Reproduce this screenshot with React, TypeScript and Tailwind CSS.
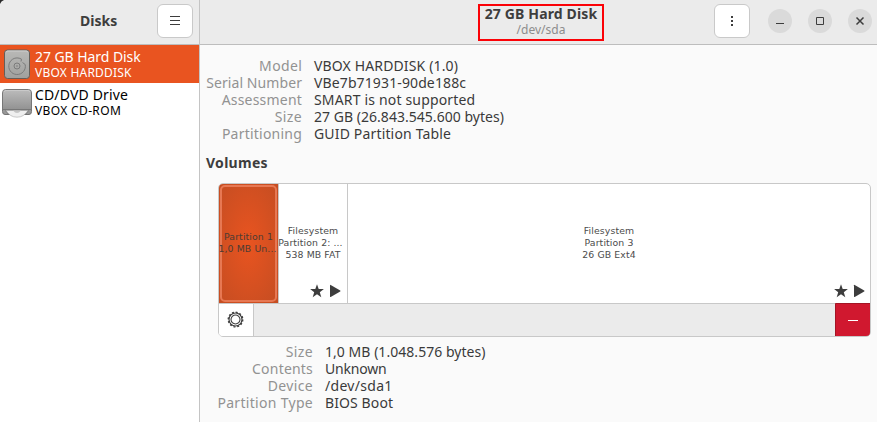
import type { ReactNode } from "react";

type Row = { label: string; value: string; labelClass?: string; valueClass?: string };

const diskRows: Row[] = [
  { label: "Model", value: "VBOX HARDDISK (1.0)", labelClass: "tracking-[0.4px] -mr-[0.4px]", valueClass: "tracking-[0.14px]" },
  { label: "Serial Number", value: "VBe7b71931-90de188c", labelClass: "tracking-[0.08px]", valueClass: "tracking-[0.12px]" },
  { label: "Assessment", value: "SMART is not supported", labelClass: "tracking-[0.2px]", valueClass: "tracking-[0.17px]" },
  { label: "Size", value: "27 GB (26.843.545.600 bytes)", labelClass: "tracking-[0.35px]", valueClass: "tracking-[0.03px]" },
  { label: "Partitioning", value: "GUID Partition Table", labelClass: "tracking-[0.22px]", valueClass: "tracking-[0.16px]" },
];

const volumeRows: Row[] = [
  { label: "Size", value: "1,0 MB (1.048.576 bytes)", labelClass: "tracking-[0.35px]", valueClass: "tracking-[0.04px]" },
  { label: "Contents", value: "Unknown", labelClass: "tracking-[0.2px]", valueClass: "-tracking-[0.2px]" },
  { label: "Device", value: "/dev/sda1", labelClass: "tracking-[0.35px]", valueClass: "tracking-[0.3px]" },
  { label: "Partition Type", value: "BIOS Boot", labelClass: "tracking-[0.3px]", valueClass: "tracking-[0.1px]" },
];

function Details({ rows, className }: { rows: Row[]; className: string }) {
  return (
    <dl className={`grid auto-rows-[17px] gap-x-3 text-[14px] leading-[17px] whitespace-nowrap ${className}`}>
      {rows.map((r) => (
        <div key={r.label} className="contents">
          <dt className="text-right text-[#929292]"><span className={r.labelClass}>{r.label}</span></dt>
          <dd className="text-[#3a3a3a]"><span className={r.valueClass}>{r.value}</span></dd>
        </div>
      ))}
    </dl>
  );
}

function HardDiskIcon() {
  return (
    <svg width="26" height="30" viewBox="0 0 26 30" fill="none">
      <defs>
        <linearGradient id="hd" x1="0" y1="0" x2="0" y2="1">
          <stop stopColor="#b9b9b7" />
          <stop offset="1" stopColor="#a0a09e" />
        </linearGradient>
      </defs>
      <rect x=".5" y="1" width="25" height="28.5" rx="3" fill="url(#hd)" stroke="#655e59" />
      <path d="M2 3.5Q2 2 4 2H22Q24 2 24 3.5" stroke="#cecece" />
      <path d="M17.5 10.2A8.3 8.3 0 1 0 21.2 15.5M17.5 10.2L17 12.5M21.2 15.5L18.5 13.5" stroke="#7b7b7b" />
      <circle cx="13" cy="17" r="3" stroke="#7b7b7b" />
      <circle cx="13" cy="17" r=".8" fill="#7b7b7b" />
    </svg>
  );
}

function OpticalDriveIcon() {
  return (
    <svg width="30" height="29" viewBox="0 0 30 29" fill="none">
      <defs>
        <linearGradient id="od" x1="0" y1="0" x2="0" y2="1">
          <stop stopColor="#bcbcbc" />
          <stop offset="1" stopColor="#929292" />
        </linearGradient>
      </defs>
      <path d="M.5 18H29.5V22.5Q29.5 25.5 27 25.5H3Q.5 25.5 .5 22.5Z" fill="#999" stroke="#747474" />
      <path d="M3 21.5H27L24 25H6Z" fill="#666" />
      <path d="M4 21.5H26Q22 28.2 15 28.2Q8 28.2 4 21.5Z" fill="#efefef" stroke="#aaa" strokeWidth=".6" />
      <path d="M11 21.5H19Q17 24 15 24Q13 24 11 21.5Z" fill="#c5c5c5" />
      <path d="M3.5 .5H26.5Q29.5 .5 29.5 4V20.5H.5V4Q.5 .5 3.5 .5Z" fill="url(#od)" stroke="#777" />
      <path d="M2 3Q2 1.5 4 1.5H26Q28 1.5 28 3" stroke="#d0d0d0" strokeWidth=".7" />
      <path d="M1 20.5H29" stroke="#777" />
    </svg>
  );
}

function VolumeIcons() {
  return (
    <svg width="32" height="14" viewBox="0 0 32 14" fill="#3d3d3d">
      <path d="M7 .2L8.7 5.1H13.9L9.8 8.2L11.3 13.2L7 10.2L2.7 13.2L4.2 8.2L.1 5.1H5.3Z" />
      <path d="M20 1.2Q20 .5 20.7 .9L30.2 6.4Q30.9 7 30.2 7.5L20.7 12.9Q20 13.2 20 12.5Z" />
    </svg>
  );
}

function GearIcon() {
  return (
    <svg width="17" height="17" viewBox="-8.5 -8.5 17 17" fill="none" stroke="#3d3d3d">
      <circle r="6.5" strokeWidth="1.2" />
      <circle r="7.3" strokeWidth="1.3" strokeDasharray="2 1.822" />
      <circle r="4.5" strokeWidth="1.1" />
    </svg>
  );
}

function WindowButton({ children }: { children: ReactNode }) {
  return (
    <button className="flex size-6 items-center justify-center rounded-full bg-[#dadada]">
      <svg width="10" height="10" viewBox="0 0 10 10" fill="none" stroke="#3d3d3d">{children}</svg>
    </button>
  );
}

function HeaderButton({ children, className }: { children: ReactNode; className: string }) {
  return (
    <button className={`flex h-[34px] w-9 items-center justify-center rounded-[6px] border border-[#c9c9c9] bg-white ${className}`}>
      {children}
    </button>
  );
}

export default function App() {
  return (
    <div className="flex h-[422px] w-[877px] overflow-hidden bg-[#fafafa] font-['Noto_Sans',sans-serif] text-[#3d3d3d]">
      <aside className="flex w-[200px] shrink-0 flex-col border-r border-[#c4c4c4] bg-white">
        <header className="relative flex h-[45px] shrink-0 items-start border-b border-[#bdbdbd] bg-[#ebebeb]">
          <svg className="absolute left-0 top-0" width="4" height="4"><path d="M0 0H4Q1 1 0 4Z" fill="#292929" /></svg>
          <h1 className="ml-[80px] w-[77px] pt-[11px] text-[14px] font-bold leading-5">Disks</h1>
          <HeaderButton className="mt-1">
            <svg width="10" height="10" viewBox="0 0 10 10" stroke="#3d3d3d"><path d="M0 .5H10M0 4.5H10M0 8.5H10" /></svg>
          </HeaderButton>
        </header>
        <div className="flex h-[38px] items-start bg-[#e95420] pl-1 pt-1 text-white">
          <HardDiskIcon />
          <div className="-mt-px ml-[5px] whitespace-nowrap">
            <p className="text-[14px] leading-[17px] tracking-[-0.06px]">27 GB Hard Disk</p>
            <p className="mt-px text-[12px] leading-[14px] tracking-[0.22px]">VBOX HARDDISK</p>
          </div>
        </div>
        <div className="flex h-[38px] items-start pl-[2px] pt-[6px] text-black">
          <OpticalDriveIcon />
          <div className="-mt-[3px] ml-[3px] whitespace-nowrap">
            <p className="text-[14px] leading-[17px] tracking-[0.15px]">CD/DVD Drive</p>
            <p className="mt-px text-[12px] leading-[14px] tracking-[0.36px]">VBOX CD-ROM</p>
          </div>
        </div>
      </aside>

      <main className="flex min-w-0 flex-1 flex-col">
        <header className="flex h-[45px] shrink-0 items-start border-b border-[#bdbdbd] bg-[#ebebeb]">
          <div className="ml-[278px] mt-1 h-[37px] w-[126px] whitespace-nowrap border-2 border-[#fb0207] text-center">
            <h2 className="text-[14px] font-bold leading-[16px] tracking-[0.14px]">27 GB Hard Disk</h2>
            <p className="text-[12px] leading-[15px] text-[#8d8d8d]">/dev/sda</p>
          </div>
          <HeaderButton className="ml-[110px] mt-1">
            <svg width="2" height="10" viewBox="0 0 2 10" fill="#3d3d3d"><path d="M0 0H2V2H0ZM0 4H2V6H0ZM0 8H2V10H0Z" /></svg>
          </HeaderButton>
          <div className="ml-[18px] mt-[9px] flex gap-4">
            <WindowButton><path d="M1 7.5H9" /></WindowButton>
            <WindowButton><path d="M1.5 1.5H8.5V8.5H1.5Z" /></WindowButton>
            <WindowButton><path d="M1.5 1.5L8.5 8.5M8.5 1.5L1.5 8.5" strokeWidth="1.5" /></WindowButton>
          </div>
        </header>

        <Details rows={diskRows} className="mt-[12px] grid-cols-[102px_auto]" />
        <h3 className="ml-[6px] mt-[11px] text-[14px] font-bold leading-[20px] tracking-[0.28px]">Volumes</h3>

        <section className="ml-[18px] mt-[10px] flex h-[154px] w-[653px] shrink-0 flex-col overflow-hidden rounded-[5px] border border-[#c8c8c8] bg-white">
          <div className="flex h-[119px] font-['DejaVu_Sans',sans-serif] text-[9.33px] leading-[12px] tracking-[0.1px] text-[#4b4b4b]">
            <div className="h-full w-[59px] shrink-0 bg-[radial-gradient(ellipse_at_center,#e95420_0%,#c44d22_100%)] p-px">
              <div className="flex h-full flex-col items-center justify-center whitespace-nowrap rounded-[5px] border-2 border-[#e77853] pb-[2px] text-[#4d3b34]">
                <span>Partition 1</span>
                <span className="-ml-[2px]">1,0 MB Un...</span>
              </div>
            </div>
            <div className="flex w-[70px] shrink-0 flex-col items-center whitespace-nowrap border-x border-[#c8c8c8] pt-[41px]">
              <span>Filesystem</span>
              <span className="-ml-[5px]">Partition 2: ...</span>
              <span>538 MB FAT</span>
              <div className="ml-[26px] mt-[23px]"><VolumeIcons /></div>
            </div>
            <div className="flex flex-1 flex-col items-center pt-[41px]">
              <span>Filesystem</span>
              <span>Partition 3</span>
              <span>26 GB Ext4</span>
              <div className="mr-[4px] mt-[23px] self-end"><VolumeIcons /></div>
            </div>
          </div>
          <div className="flex h-[33px] border-t border-[#c8c8c8] bg-[#ebebeb]">
            <button className="flex w-[35px] items-center justify-center border-r border-[#c8c8c8] bg-white pb-px pr-px"><GearIcon /></button>
            <div className="flex-1" />
            <button className="-mr-px -mt-px flex h-[34px] w-9 items-center justify-center rounded-br-[5px] border border-[#a31525] bg-[#d0182f]">
              <span className="h-px w-[10px] bg-white" />
            </button>
          </div>
        </section>

        <Details rows={volumeRows} className="mt-[6px] grid-cols-[113px_auto]" />
      </main>
    </div>
  );
}
